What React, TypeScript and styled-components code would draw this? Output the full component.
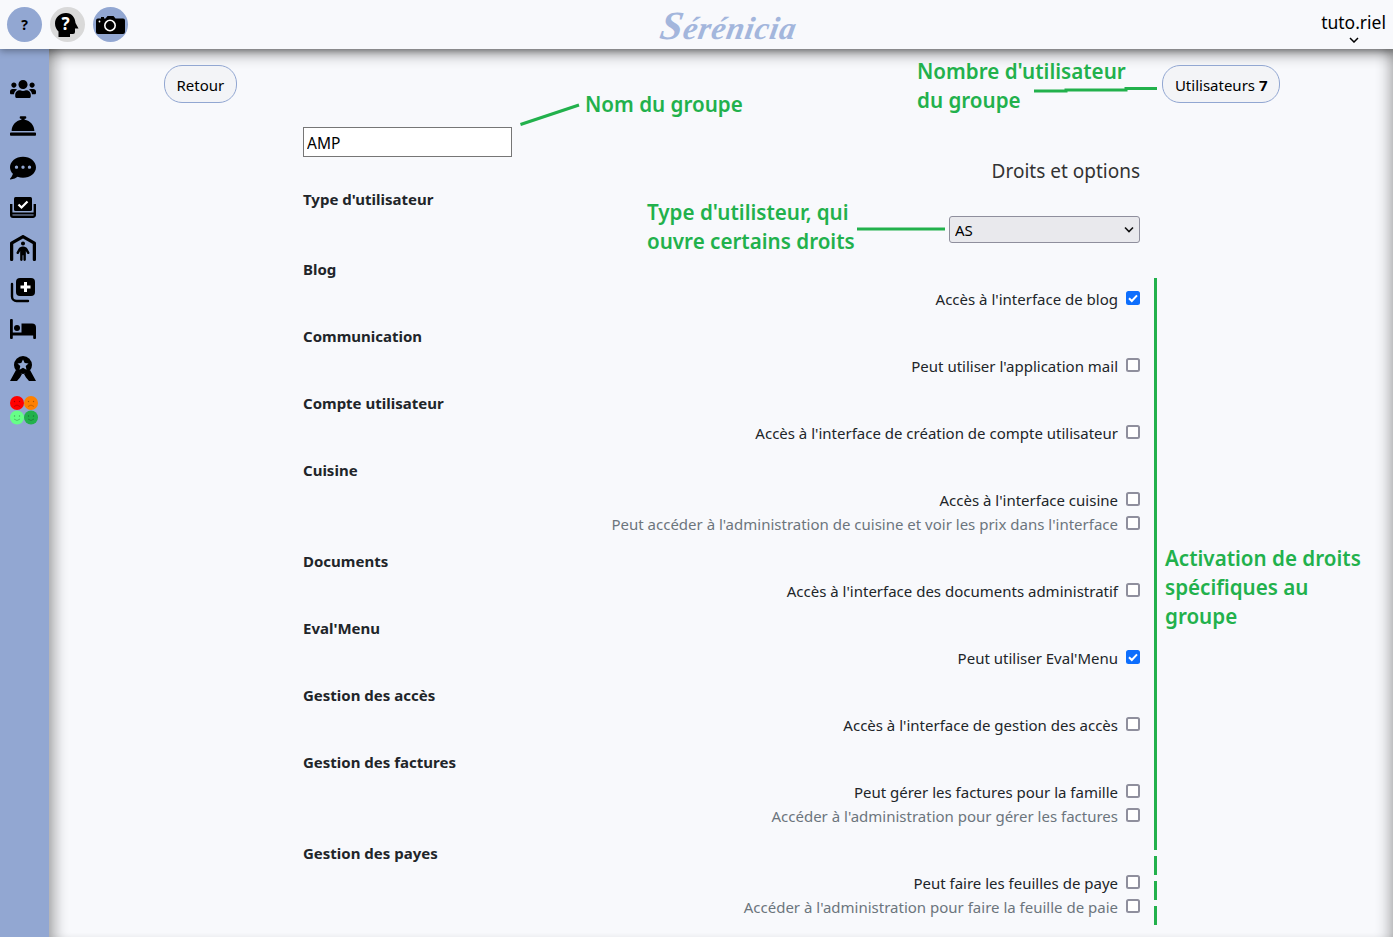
import styled, { createGlobalStyle } from 'styled-components';
import { FaUsers, FaConciergeBell, FaCommentDots } from 'react-icons/fa';
import { FaPersonShelter } from 'react-icons/fa6';

const GlobalStyle = createGlobalStyle`
  html, body {
    margin: 0;
    padding: 0;
    height: 100%;
    overflow: hidden;
    background: #f8f9fc;
    color: #212529;
    font-family: "Noto Sans", "Open Sans", sans-serif;
    font-size: 15px;
  }
  * { box-sizing: border-box; }
`;

const selectArrow = `url("data:image/svg+xml,%3Csvg xmlns='http://www.w3.org/2000/svg' width='10' height='7' viewBox='0 0 10 7'%3E%3Cpath d='M1 1.500l4 4 4-4' fill='none' stroke='%23111' stroke-width='1.600'/%3E%3C/svg%3E")`;
const checkMark = `url("data:image/svg+xml,%3Csvg xmlns='http://www.w3.org/2000/svg' width='14' height='14' viewBox='0 0 14 14'%3E%3Cpath d='M3 7.200l2.800 2.800 5.200-5.600' fill='none' stroke='%23fff' stroke-width='2'/%3E%3C/svg%3E")`;

const Page = styled.div`
  position: relative;
  height: 100vh;
  display: grid;
  grid-template-rows: 49px 1fr;
  overflow: hidden;
`;

const Header = styled.header`
  position: relative;
  z-index: 2;
  display: grid;
  grid-template-columns: 1fr auto 1fr;
  align-items: center;
  padding: 0 7px;
  background: #f8f9fc;
  box-shadow: 0 2px 7px rgba(0, 0, 0, 0.35);
`;

const HeaderTools = styled.div`
  display: flex;
  gap: 8px;
`;

const RoundTool = styled.button<{ $grey?: boolean }>`
  position: relative;
  width: 35px;
  height: 35px;
  padding: 0;
  border: 0;
  border-radius: 50%;
  display: flex;
  align-items: center;
  justify-content: center;
  background: ${props => (props.$grey ? '#d9d9d9' : '#92a7d2')};
  color: #000;
  font: 700 14px "Noto Sans", sans-serif;
`;

const HeadMark = styled.span`
  position: absolute;
  left: 5px;
  top: 0;
  width: 21px;
  text-align: center;
  color: #fff;
  font-size: 17px;
  line-height: 33px;
`;

const Logo = styled.div`
  margin-left: 66px;
  font-family: "Liberation Serif", serif;
  font-style: italic;
  font-weight: 700;
  font-size: 32px;
  letter-spacing: 0.8px;
  color: #a3b6dc;
  transform: translateY(1px) skewX(-10deg);

  span {
    font-size: 40px;
  }
`;

const UserMenu = styled.div`
  justify-self: end;
  align-self: start;
  display: flex;
  flex-direction: column;
  align-items: center;
  font-size: 17.500px;
  line-height: 24px;
  color: #000;
  padding-top: 10px;

  svg {
    display: block;
    margin-top: 3px;
  }
`;

const Body = styled.div`
  display: flex;
  min-height: 0;
`;

const Sidebar = styled.nav`
  flex: 0 0 49px;
  padding-top: 20px;
  background: #92a7d2;
  display: flex;
  flex-direction: column;
  align-items: center;
`;

const NavItem = styled.a<{ $nudge?: number }>`
  height: 40px;
  width: 100%;
  flex: none;
  margin-top: ${props => props.$nudge ?? 0}px;
  margin-bottom: ${props => -(props.$nudge ?? 0)}px;
  display: flex;
  align-items: center;
  justify-content: center;
  padding-right: 3px;
  color: #000;
  font-size: 26px;
`;

const Main = styled.main`
  flex: 1;
  min-width: 0;
  overflow: hidden;
  padding: 16px 113px 0 115px;
  background: #f8f9fc;
  box-shadow:
    inset 0 16px 14px -10px rgba(0, 0, 0, 0.32),
    inset 16px 0 14px -10px rgba(0, 0, 0, 0.32),
    inset -14px 0 14px -10px rgba(0, 0, 0, 0.3);
`;

const TopRow = styled.div`
  display: flex;
  justify-content: space-between;
`;

const PillButton = styled.button`
  height: 38px;
  padding: 1px 11.500px 0;
  border: 1px solid #92a7d2;
  border-radius: 18px;
  background: #f3f4f7;
  color: #000;
  font: 400 15px "Noto Sans", sans-serif;

  b {
    font-weight: 700;
  }
`;

const Form = styled.form`
  width: 837px;
  margin: 24px 0 0 139px;
`;

const NameInput = styled.input`
  display: block;
  width: 209px;
  height: 30px;
  padding: 2px 3px 0;
  border: 1px solid #767676;
  background: #fff;
  color: #000;
  font: 400 15.500px "Noto Sans", sans-serif;
`;

const RightsTitle = styled.div`
  margin-top: 2px;
  text-align: right;
  font-size: 19px;
  line-height: 24px;
  color: #333;
`;

const Section = styled.section`
  margin-bottom: 13px;
`;

const SectionTitle = styled.h3`
  margin: 0 0 6px;
  font-size: 15px;
  line-height: 24px;
  font-weight: 700;
  color: #212529;
`;

const TypeBlock = styled.section`
  margin: 4px 0 14px;

  h3 {
    margin-bottom: 5px;
  }
`;

const TypeSelect = styled.select`
  display: block;
  appearance: none;
  width: 191px;
  height: 27px;
  margin-left: auto;
  padding: 1px 0 0 5px;
  background: #e9e9ed ${selectArrow} no-repeat right 5px center;
  border: 1px solid #8f8f9d;
  border-radius: 3px;
  color: #000;
  font: 400 15px "Noto Sans", sans-serif;
`;

const OptionRow = styled.label<{ $muted?: boolean }>`
  height: 24px;
  display: flex;
  align-items: center;
  justify-content: flex-end;
  gap: 8px;
  font-size: 15px;
  color: ${props => (props.$muted ? '#6c757d' : '#212529')};
`;

const OptionBox = styled.input`
  appearance: none;
  width: 14px;
  height: 14px;
  margin: -2px 0 0;
  border: 2px solid #8f8f9d;
  border-radius: 2.500px;
  background: #fff;

  &:checked {
    border: 0;
    background: #0d6efd ${checkMark} no-repeat center;
  }
`;

const Note = styled.div<{ $x: number; $y: number }>`
  position: absolute;
  z-index: 3;
  left: ${props => props.$x}px;
  top: ${props => props.$y}px;
  font-size: 20.600px;
  line-height: 29px;
  font-weight: 600;
  color: #22b14c;
  white-space: nowrap;
`;

const NoteLines = styled.svg`
  position: absolute;
  z-index: 3;
  inset: 0;
  width: 100%;
  height: 100%;
  pointer-events: none;
`;

const Faces = styled.svg`
  width: 30px;
  height: 30px;
  margin-left: 2px;
  margin-top: 0;
`;

function HeadIcon() {
  return (
    <svg width="26" height="24" viewBox="0 0 26 24">
      <path d="M11 0C5 0 0 4.500 0 10.500c0 3.500 1.500 6 3.500 8V24H15v-3h3a2 2 0 0 0 2-2v-3.500h3.500L20.500 10C20 4.500 17 0 11 0z" fill="#000" />
    </svg>
  );
}

function CameraIcon() {
  return (
    <svg width="29" height="18" viewBox="0 0 29 18">
      <path d="M2 2.500h3V1h3v1.500h1.500L11.500 0h6l2 2.500H27a2 2 0 0 1 2 2V16a2 2 0 0 1-2 2H2a2 2 0 0 1-2-2V4.500a2 2 0 0 1 2-2z" fill="#000" />
      <circle cx="14" cy="9.500" r="5.200" fill="none" stroke="#fff" strokeWidth="1.600" />
      <circle cx="3.500" cy="5.500" r=".9" fill="#fff" />
    </svg>
  );
}

function TrayIcon() {
  return (
    <svg width="26" height="21" viewBox="0 0 26 21">
      <rect x="4" y="0" width="18" height="14" rx="1.500" fill="#000" />
      <path d="M8.500 7.500l3 3 6-6" fill="none" stroke="#fff" strokeWidth="2.200" />
      <path d="M1.200 7v11a1.800 1.800 0 0 0 1.800 1.800h20a1.800 1.800 0 0 0 1.800-1.800V7" fill="none" stroke="#000" strokeWidth="2.400" />
      <rect x="1" y="15.500" width="24" height="2" fill="#000" />
    </svg>
  );
}

function StackAddIcon() {
  return (
    <svg width="26" height="26" viewBox="0 0 26 26">
      <rect x="6" y="1" width="19" height="18" rx="4" fill="#000" />
      <path d="M15.500 5v10M10.500 10h10" stroke="#fff" strokeWidth="3" />
      <path d="M2 7v12.500a4.500 4.500 0 0 0 4.500 4.500H18" fill="none" stroke="#000" strokeWidth="2.400" strokeLinecap="round" />
    </svg>
  );
}

function BedIcon() {
  return (
    <svg width="26" height="20" viewBox="0 0 26 20">
      <rect x="0" y="0" width="2.800" height="20" rx="1" fill="#000" />
      <rect x="23.200" y="10" width="2.800" height="10" rx="1" fill="#000" />
      <rect x="0" y="13.500" width="26" height="3" fill="#000" />
      <circle cx="7" cy="9" r="3" fill="#000" />
      <path d="M11.500 4.500H22a4 4 0 0 1 4 4v6H11.500z" fill="#000" />
    </svg>
  );
}

function RosetteIcon() {
  return (
    <svg width="26" height="26" viewBox="0 0 26 26">
      <path d="M6 14L0 25h7l3-3.500L12 18zM20 14l6 11h-7l-3-3.500L14 18z" fill="#000" />
      <circle cx="13" cy="9" r="9" fill="#000" />
      <path d="M13 3.500l1.700 3.500 3.800.4-2.800 2.600.8 3.700-3.500-1.900-3.500 1.900.8-3.700-2.800-2.600 3.800-.4z" fill="#92a7d2" />
    </svg>
  );
}

function MoodFaces() {
  const faces = [
    { cx: 8, cy: 8, fill: '#ff0000', sad: true },
    { cx: 22, cy: 8, fill: '#ff8000', sad: true },
    { cx: 8, cy: 22.500, fill: '#66ff88', sad: false },
    { cx: 22, cy: 22.500, fill: '#22b14c', sad: false },
  ];
  return (
    <Faces viewBox="0 0 30 30">
      {faces.map(f => (
        <g key={f.fill}>
          <circle cx={f.cx} cy={f.cy} r="7" fill={f.fill} />
          <circle cx={f.cx - 2.500} cy={f.cy - 1.500} r=".7" fill="#0005" />
          <circle cx={f.cx + 2.500} cy={f.cy - 1.500} r=".7" fill="#0005" />
          <path
            d={f.sad
              ? `M${f.cx - 3} ${f.cy + 3.500}q3 -3 6 0`
              : `M${f.cx - 3} ${f.cy + 1.500}q3 3 6 0`}
            fill="none"
            stroke="#0005"
            strokeWidth=".7"
          />
        </g>
      ))}
    </Faces>
  );
}

type Option = { label: string; checked?: boolean; muted?: boolean };

const sections: { title: string; options: Option[] }[] = [
  { title: 'Blog', options: [{ label: "Accès à l'interface de blog", checked: true }] },
  { title: 'Communication', options: [{ label: "Peut utiliser l'application mail" }] },
  { title: 'Compte utilisateur', options: [{ label: "Accès à l'interface de création de compte utilisateur" }] },
  {
    title: 'Cuisine',
    options: [
      { label: "Accès à l'interface cuisine" },
      { label: "Peut accéder à l'administration de cuisine et voir les prix dans l'interface", muted: true },
    ],
  },
  { title: 'Documents', options: [{ label: "Accès à l'interface des documents administratif" }] },
  { title: "Eval'Menu", options: [{ label: "Peut utiliser Eval'Menu", checked: true }] },
  { title: 'Gestion des accès', options: [{ label: "Accès à l'interface de gestion des accès" }] },
  {
    title: 'Gestion des factures',
    options: [
      { label: 'Peut gérer les factures pour la famille' },
      { label: "Accéder à l'administration pour gérer les factures", muted: true },
    ],
  },
  {
    title: 'Gestion des payes',
    options: [
      { label: 'Peut faire les feuilles de paye' },
      { label: "Accéder à l'administration pour faire la feuille de paie", muted: true },
    ],
  },
];

export default function App() {
  return (
    <Page>
      <GlobalStyle />
      <Header>
        <HeaderTools>
          <RoundTool type="button">?</RoundTool>
          <RoundTool type="button" $grey>
            <HeadIcon />
            <HeadMark>?</HeadMark>
          </RoundTool>
          <RoundTool type="button">
            <CameraIcon />
          </RoundTool>
        </HeaderTools>
        <Logo><span>S</span>érénicia</Logo>
        <UserMenu>
          tuto.riel
          <svg width="10" height="6" viewBox="0 0 10 6">
            <path d="M1 1l4 4 4-4" fill="none" stroke="#000" strokeWidth="1.500" />
          </svg>
        </UserMenu>
      </Header>
      <Body>
        <Sidebar>
          <NavItem><FaUsers /></NavItem>
          <NavItem $nudge={-3}><FaConciergeBell /></NavItem>
          <NavItem $nudge={-1}><FaCommentDots /></NavItem>
          <NavItem $nudge={-2}><TrayIcon /></NavItem>
          <NavItem $nudge={-1}><FaPersonShelter /></NavItem>
          <NavItem $nudge={1}><StackAddIcon /></NavItem>
          <NavItem><BedIcon /></NavItem>
          <NavItem><RosetteIcon /></NavItem>
          <NavItem $nudge={1}><MoodFaces /></NavItem>
        </Sidebar>
        <Main>
          <TopRow>
            <PillButton type="button">Retour</PillButton>
            <PillButton type="button">Utilisateurs <b>7</b></PillButton>
          </TopRow>
          <Form>
            <NameInput defaultValue="AMP" />
            <RightsTitle>Droits et options</RightsTitle>
            <TypeBlock>
              <SectionTitle>Type d'utilisateur</SectionTitle>
              <TypeSelect defaultValue="AS">
                <option>AS</option>
              </TypeSelect>
            </TypeBlock>
            {sections.map(section => (
              <Section key={section.title}>
                <SectionTitle>{section.title}</SectionTitle>
                {section.options.map(option => (
                  <OptionRow key={option.label} $muted={option.muted}>
                    {option.label}
                    <OptionBox type="checkbox" defaultChecked={option.checked} />
                  </OptionRow>
                ))}
              </Section>
            ))}
          </Form>
        </Main>
      </Body>
      <Note $x={585} $y={90}>Nom du groupe</Note>
      <Note $x={917} $y={57}>Nombre d'utilisateur<br />du groupe</Note>
      <Note $x={647} $y={198}>Type d'utilisteur, qui<br />ouvre certains droits</Note>
      <Note $x={1165} $y={544}>Activation de droits<br />spécifiques au<br />groupe</Note>
      <NoteLines>
        <g fill="none" stroke="#22b14c" strokeWidth="3">
          <path d="M520.500 124.500L579 105" />
          <path d="M1034 91h32v-1h60v-1.500h31" />
          <path d="M857 229h88" />
          <path d="M1155.500 278V850M1155.500 856v19M1155.500 881v19M1155.500 906v19" />
        </g>
      </NoteLines>
    </Page>
  );
}
